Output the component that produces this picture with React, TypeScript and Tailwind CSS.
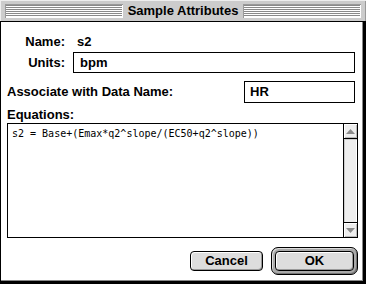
import React from "react";

const sans = { fontFamily: '"Liberation Sans", Arial, sans-serif' };
const mono = { fontFamily: '"DejaVu Sans Mono", "Liberation Mono", monospace' };

function Stripes() {
  return (
    <div className="flex-1 h-[14px] p-px shadow-[inset_1px_1px_0_#999,inset_-1px_-1px_0_#fff]">
      <div className="h-[12px] bg-[repeating-linear-gradient(to_bottom,#8a8a8a_0px,#8a8a8a_1px,#ffffff_1px,#ffffff_2px)]" />
    </div>
  );
}

function Arrow({ up }: { up: boolean }) {
  return (
    <svg width="9" height="5" viewBox="0 0 9 5">
      {up ? (
        <polygon points="0,5 9,5 4.5,0" fill="#8a8a8a" />
      ) : (
        <polygon points="0,0 9,0 4.5,5" fill="#8a8a8a" />
      )}
    </svg>
  );
}

export default function App() {
  return (
    <div className="w-[366px] h-[284px] bg-white flex flex-col text-black" style={sans}>
      {/* title bar */}
      <div className="h-[21px] bg-[#cccccc] flex items-center pl-[5px] pr-[5px] gap-[4px] shadow-[inset_1px_1px_0_#eeeeee,inset_-1px_0_0_#999]">
        <Stripes />
        <div className="text-[13px] font-bold leading-none px-[1px]">Sample Attributes</div>
        <Stripes />
      </div>
      <div className="h-px bg-black" />
      {/* body */}
      <div className="flex-1 flex flex-col border-l border-black border-r-[3px] border-b-[3px]">
        <div className="flex-1 flex flex-col border-r border-b border-[#888888] pl-[6px] pr-[4px] text-[13px] font-bold">
          {/* Name row */}
          <div className="mt-[11px] h-[18px] flex items-center">
            <div className="w-[58px] text-right">Name:</div>
            <div className="ml-[9px] pl-[3px]">s2</div>
          </div>
          {/* Units row */}
          <div className="mt-px h-[21px] flex items-center">
            <div className="w-[58px] text-right">Units:</div>
            <div className="ml-[8px] w-[282px] h-[21px] border border-black flex items-center pl-[6px]">bpm</div>
          </div>
          {/* Associate row */}
          <div className="mt-[8px] h-[22px] flex items-center">
            <div>Associate with Data Name:</div>
            <div className="ml-auto mr-[3px] w-[111px] h-[22px] border border-black flex items-center pl-[5px]">HR</div>
          </div>
          {/* Equations label */}
          <div className="mt-[3px] h-[17px] flex items-center">Equations:</div>
          {/* Textarea */}
          <div className="w-[351px] h-[115px] border border-black flex">
            <div className="flex-1 pl-[4px] pt-[3px] text-[10px] font-normal leading-[13px]" style={mono}>
              s2 = Base+(Emax*q2^slope/(EC50+q2^slope))
            </div>
            <div className="w-[14px] border-l border-black flex flex-col bg-[#eeeeee]">
              <div className="h-[15px] border-b border-black flex items-center justify-center shadow-[inset_1px_1px_0_#fff,inset_-1px_-1px_0_#bbb]">
                <Arrow up />
              </div>
              <div className="flex-1 bg-[#eeeeee] shadow-[inset_1px_1px_0_#cccccc,inset_-1px_0_0_#ffffff]" />
              <div className="h-[15px] border-t border-black flex items-center justify-center shadow-[inset_1px_1px_0_#fff,inset_-1px_-1px_0_#bbb]">
                <Arrow up={false} />
              </div>
            </div>
          </div>
          {/* Buttons */}
          <div className="mt-[9px] w-[351px] flex items-center justify-end gap-[8px]">
            <div className="w-[73px] h-[20px] rounded-[4px] border border-black bg-[#dddddd] flex items-center justify-center shadow-[inset_1px_1px_0_#fff,inset_-1px_-1px_0_#999]">
              Cancel
            </div>
            <div className="w-[87px] h-[28px] rounded-[7px] border border-black bg-[#aaaaaa] p-[3px] shadow-[inset_1px_1px_0_#dddddd,inset_-1px_-1px_0_#777]">
              <div className="w-full h-full rounded-[4px] border border-black bg-[#dddddd] flex items-center justify-center shadow-[inset_1px_1px_0_#fff,inset_-1px_-1px_0_#999]">
                OK
              </div>
            </div>
          </div>
        </div>
      </div>
    </div>
  );
}
